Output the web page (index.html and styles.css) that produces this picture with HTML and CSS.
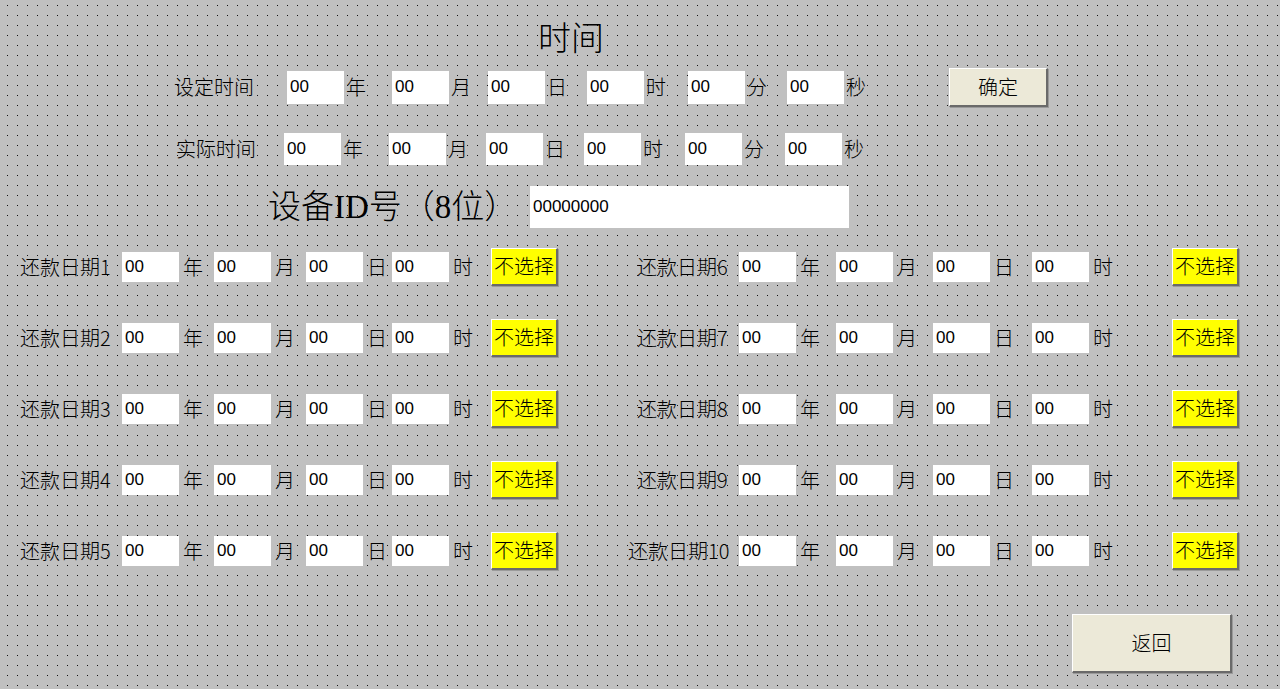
FILE: index.html
```html
<!DOCTYPE html>
<html lang="zh-CN">
<head>
    <meta charset="UTF-8">
    <meta name="viewport" content="width=device-width, initial-scale=1.0">
    <title>时间设置</title>
    <link rel="stylesheet" href="styles.css">
</head>
<body>
<div class="screen">
    <h1 class="title">时间</h1>

    <!-- 设定时间 -->
    <div class="time-row time-row--set">
        <span class="label">设定时间</span>
        <span class="cell"><input class="field" value="00"><span class="unit">年</span></span>
        <span class="cell"><input class="field" value="00"><span class="unit">月</span></span>
        <span class="cell"><input class="field" value="00"><span class="unit">日</span></span>
        <span class="cell"><input class="field" value="00"><span class="unit">时</span></span>
        <span class="cell"><input class="field" value="00"><span class="unit">分</span></span>
        <span class="cell"><input class="field" value="00"><span class="unit">秒</span></span>
        <button class="btn btn--ok">确定</button>
    </div>

    <!-- 实际时间 -->
    <div class="time-row time-row--real">
        <span class="label">实际时间</span>
        <span class="cell"><input class="field" value="00"><span class="unit">年</span></span>
        <span class="cell"><input class="field" value="00"><span class="unit">月</span></span>
        <span class="cell"><input class="field" value="00"><span class="unit">日</span></span>
        <span class="cell"><input class="field" value="00"><span class="unit">时</span></span>
        <span class="cell"><input class="field" value="00"><span class="unit">分</span></span>
        <span class="cell"><input class="field" value="00"><span class="unit">秒</span></span>
    </div>

    <div class="id-row">
        <span class="id-label">设备ID号（8位）</span>
        <input class="field field--id" value="00000000">
    </div>

    <!-- 还款日期 1-5 / 6-10 -->
    <div class="repay">
        <div class="repay-col repay-col--left">
            <div class="repay-row">
                <span class="label">还款日期1</span>
                <span class="cell"><input class="field" value="00"><span class="unit">年</span></span>
                <span class="cell"><input class="field" value="00"><span class="unit">月</span></span>
                <span class="cell"><input class="field" value="00"><span class="unit">日</span></span>
                <span class="cell"><input class="field" value="00"><span class="unit">时</span></span>
                <button class="btn btn--pick">不选择</button>
            </div>
            <div class="repay-row">
                <span class="label">还款日期2</span>
                <span class="cell"><input class="field" value="00"><span class="unit">年</span></span>
                <span class="cell"><input class="field" value="00"><span class="unit">月</span></span>
                <span class="cell"><input class="field" value="00"><span class="unit">日</span></span>
                <span class="cell"><input class="field" value="00"><span class="unit">时</span></span>
                <button class="btn btn--pick">不选择</button>
            </div>
            <div class="repay-row">
                <span class="label">还款日期3</span>
                <span class="cell"><input class="field" value="00"><span class="unit">年</span></span>
                <span class="cell"><input class="field" value="00"><span class="unit">月</span></span>
                <span class="cell"><input class="field" value="00"><span class="unit">日</span></span>
                <span class="cell"><input class="field" value="00"><span class="unit">时</span></span>
                <button class="btn btn--pick">不选择</button>
            </div>
            <div class="repay-row">
                <span class="label">还款日期4</span>
                <span class="cell"><input class="field" value="00"><span class="unit">年</span></span>
                <span class="cell"><input class="field" value="00"><span class="unit">月</span></span>
                <span class="cell"><input class="field" value="00"><span class="unit">日</span></span>
                <span class="cell"><input class="field" value="00"><span class="unit">时</span></span>
                <button class="btn btn--pick">不选择</button>
            </div>
            <div class="repay-row">
                <span class="label">还款日期5</span>
                <span class="cell"><input class="field" value="00"><span class="unit">年</span></span>
                <span class="cell"><input class="field" value="00"><span class="unit">月</span></span>
                <span class="cell"><input class="field" value="00"><span class="unit">日</span></span>
                <span class="cell"><input class="field" value="00"><span class="unit">时</span></span>
                <button class="btn btn--pick">不选择</button>
            </div>
        </div>

        <div class="repay-col repay-col--right">
            <div class="repay-row">
                <span class="label">还款日期6</span>
                <span class="cell"><input class="field" value="00"><span class="unit">年</span></span>
                <span class="cell"><input class="field" value="00"><span class="unit">月</span></span>
                <span class="cell"><input class="field" value="00"><span class="unit">日</span></span>
                <span class="cell"><input class="field" value="00"><span class="unit">时</span></span>
                <button class="btn btn--pick">不选择</button>
            </div>
            <div class="repay-row">
                <span class="label">还款日期7</span>
                <span class="cell"><input class="field" value="00"><span class="unit">年</span></span>
                <span class="cell"><input class="field" value="00"><span class="unit">月</span></span>
                <span class="cell"><input class="field" value="00"><span class="unit">日</span></span>
                <span class="cell"><input class="field" value="00"><span class="unit">时</span></span>
                <button class="btn btn--pick">不选择</button>
            </div>
            <div class="repay-row">
                <span class="label">还款日期8</span>
                <span class="cell"><input class="field" value="00"><span class="unit">年</span></span>
                <span class="cell"><input class="field" value="00"><span class="unit">月</span></span>
                <span class="cell"><input class="field" value="00"><span class="unit">日</span></span>
                <span class="cell"><input class="field" value="00"><span class="unit">时</span></span>
                <button class="btn btn--pick">不选择</button>
            </div>
            <div class="repay-row">
                <span class="label">还款日期9</span>
                <span class="cell"><input class="field" value="00"><span class="unit">年</span></span>
                <span class="cell"><input class="field" value="00"><span class="unit">月</span></span>
                <span class="cell"><input class="field" value="00"><span class="unit">日</span></span>
                <span class="cell"><input class="field" value="00"><span class="unit">时</span></span>
                <button class="btn btn--pick">不选择</button>
            </div>
            <div class="repay-row">
                <span class="label label--wide">还款日期10</span>
                <span class="cell"><input class="field" value="00"><span class="unit">年</span></span>
                <span class="cell"><input class="field" value="00"><span class="unit">月</span></span>
                <span class="cell"><input class="field" value="00"><span class="unit">日</span></span>
                <span class="cell"><input class="field" value="00"><span class="unit">时</span></span>
                <button class="btn btn--pick">不选择</button>
            </div>
        </div>
    </div>

    <div class="footer">
        <button class="btn btn--back">返回</button>
    </div>
</div>
</body>
</html>
```

FILE: styles.css
```css
html, body {
    margin: 0;
    padding: 0;
}

body {
    background-color: #c0c0c0;
    color: #000;
    font-family: "Noto Sans CJK SC", sans-serif;
    font-size: 20px;
    font-weight: 300;
}

.screen {
    position: relative;
    width: 1280px;
    height: 689px;
    overflow: hidden;
}

/* editor grid: vertical lines masked by horizontal lines leaves 1px dots */
.screen::before {
    content: '';
    position: absolute;
    top: 0;
    left: 0;
    right: 0;
    bottom: 0;
    z-index: -1;
    background-image: linear-gradient(90deg, #111 1px, transparent 1px);
    background-size: 10px 10px;
    background-position: 7px 0;
    -webkit-mask-image: linear-gradient(#000 1px, transparent 1px);
    -webkit-mask-size: 10px 10px;
    -webkit-mask-position: 0 5px;
    mask-image: linear-gradient(#000 1px, transparent 1px);
    mask-size: 10px 10px;
    mask-position: 0 5px;
    pointer-events: none;
}

.title {
    margin: 19px 0 0 538px;
    height: 40px;
    font-family: "Liberation Serif", "Noto Sans CJK SC", serif;
    font-size: 33px;
    font-weight: 300;
    line-height: 40px;
}

.label,
.unit {
    font-size: 20px;
    line-height: 24px;
    white-space: nowrap;
}

.cell {
    display: flex;
    align-items: center;
}

.unit {
    margin-left: 2px;
}

.field {
    box-sizing: border-box;
    width: 57px;
    height: 33px;
    margin: 0;
    padding: 0 0 0 3px;
    border: none;
    outline: none;
    background: #fff;
    color: #000;
    font-family: "Liberation Sans", Arial, sans-serif;
    font-size: 17px;
}

/* time rows */
.time-row {
    display: grid;
    align-items: center;
    height: 40px;
}

.time-row--set {
    margin-top: 8px;
    padding-left: 174px;
    grid-template-columns: 113px 105px 96px 99px 101px 99px 162px 99px;
}

.time-row--real {
    margin-top: 22px;
    padding-left: 176px;
    grid-template-columns: 108px 105px 97px 98px 101px 100px 100px;
}

.time-row--real .field {
    height: 32px;
}

/* device id */
.id-row {
    display: flex;
    align-items: center;
    height: 42px;
    margin-top: 17px;
    padding-left: 268px;
}

.id-label {
    width: 262px;
    font-family: "Liberation Serif", "Noto Sans CJK SC", serif;
    font-size: 33px;
    font-weight: 300;
    line-height: 42px;
    white-space: nowrap;
}

.field--id {
    width: 319px;
    height: 42px;
}

/* repayment dates */
.repay {
    display: grid;
    grid-template-columns: 620px 1fr;
    margin-top: 3px;
}

.repay-row {
    display: grid;
    align-items: center;
    height: 71px;
}

.repay-row .field {
    height: 30px;
}

.repay-row .unit {
    margin-left: 4px;
}

.repay-col--left .repay-row {
    padding-left: 20px;
    grid-template-columns: 102px 92px 92px 86px 99px 67px;
}

.repay-col--right .repay-row {
    padding-left: 17px;
    grid-template-columns: 102px 97px 97px 99px 140px 66px;
}

.label--wide {
    margin-left: -9px;
}

/* buttons */
.btn {
    box-sizing: border-box;
    margin: 0;
    padding: 0;
    border-style: solid;
    border-width: 1px 2px 2px 1px;
    border-color: #fff #6a6a6a #6a6a6a #fff;
    box-shadow: 1px 1px 0 #9a9a9a;
    color: #000;
    font-family: "Noto Sans CJK SC", sans-serif;
    font-size: 20px;
    font-weight: 300;
    line-height: 1;
    cursor: pointer;
}

.btn--ok {
    width: 99px;
    height: 39px;
    background-color: #ece9d8;
}

.btn--pick {
    width: 67px;
    height: 38px;
    background-color: #ffff00;
}

.btn--back {
    width: 160px;
    height: 59px;
    background-color: #ece9d8;
}

.footer {
    margin-top: 28px;
    padding-left: 1072px;
}
```
